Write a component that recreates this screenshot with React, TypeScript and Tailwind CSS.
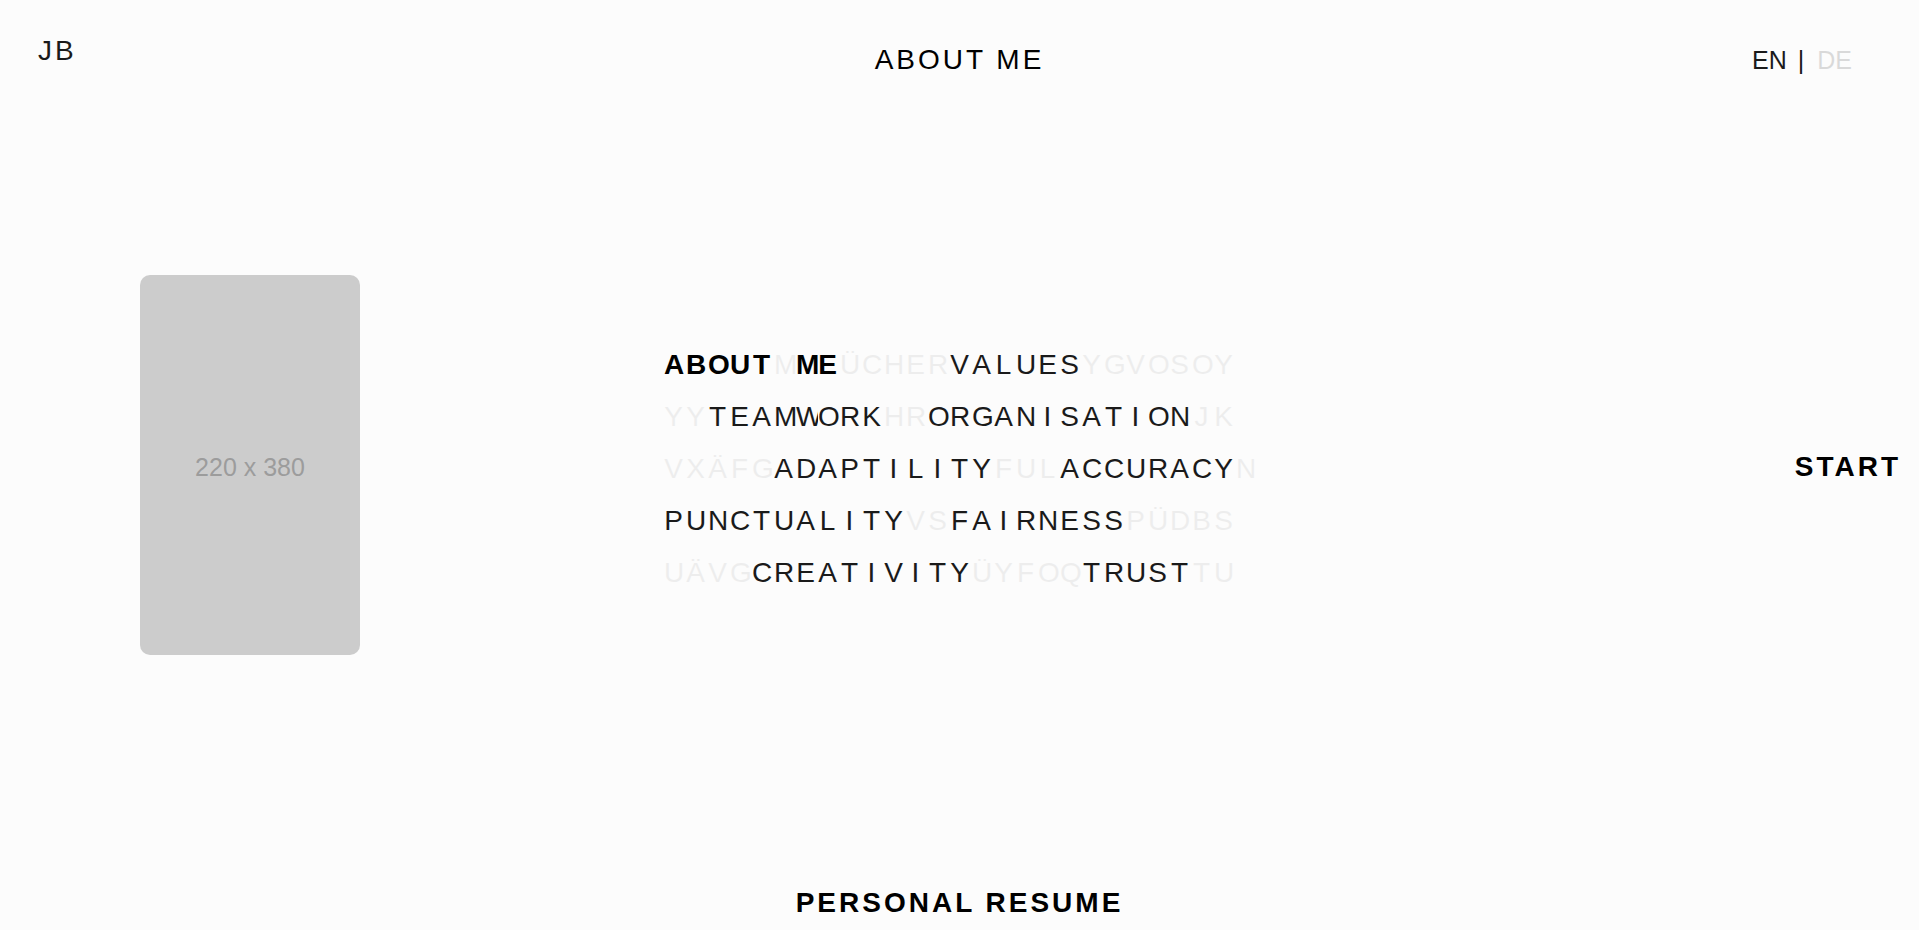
type Tone = 'noise' | 'word' | 'active';
type Segment = { text: string; tone: Tone };

const noise = (text: string): Segment => ({ text, tone: 'noise' });
const word = (text: string): Segment => ({ text, tone: 'word' });
const active = (text: string): Segment => ({ text, tone: 'active' });

const rows: Segment[][] = [
  [active('ABOUT'), noise('M'), active('ME'), noise('ÜCHER'), word('VALUES'), noise('YGVOSOY')],
  [noise('YY'), word('TEAMWORK'), noise('HR'), word('ORGANISATION'), noise('JK')],
  [noise('VXÄFG'), word('ADAPTILITY'), noise('FUL'), word('ACCURACY'), noise('N')],
  [word('PUNCTUALITY'), noise('VS'), word('FAIRNESS'), noise('PÜDBS')],
  [noise('UÄVG'), word('CREATIVITY'), noise('ÜYFOQ'), word('TRUST'), noise('TU')],
];

const tones: Record<Tone, string> = {
  noise: 'opacity-[0.06]',
  word: '',
  active: 'font-bold text-black',
};

function LetterRow({ segments }: { segments: Segment[] }) {
  return (
    <div className="flex">
      {segments.map((segment, i) => (
        <span key={i} className={`flex ${tones[segment.tone]}`}>
          {[...segment.text].map((letter, j) => (
            <span key={j} className="w-[22px] overflow-hidden text-center">
              {letter}
            </span>
          ))}
        </span>
      ))}
    </div>
  );
}

export default function App() {
  return (
    <div className="grid min-h-screen grid-rows-[1fr_auto_1fr] bg-[#fcfcfc] font-['Liberation_Sans',Arial,sans-serif] text-[28px] leading-8 text-[#1a1a1a]">
      <header className="grid grid-cols-[1fr_auto_1fr] items-start">
        <a href="#home" className="justify-self-start pt-[35px] pl-[38px] tracking-[3px]">
          JB
        </a>
        <h1 className="pt-11 tracking-[3px] text-black">ABOUT ME</h1>
        <div className="flex justify-self-end pt-11 pr-[67px] text-[25px]">
          <button type="button" className="pr-[11px]">EN</button>
          <span>|</span>
          <button type="button" className="pl-[13px] opacity-15">DE</button>
        </div>
      </header>

      <main className="grid grid-cols-[34.6%_auto_1fr] items-center">
        <div
          role="img"
          aria-label="Portrait"
          className="ml-[140px] flex h-[380px] w-[220px] items-center justify-center rounded-[10px] bg-[#cccccc] pt-1 text-[25px] text-[#9c9c9c]"
        >
          220 x 380
        </div>
        <div className="flex flex-col gap-6 pt-2 leading-7 tracking-[3px]">
          {rows.map((segments, i) => (
            <LetterRow key={i} segments={segments} />
          ))}
        </div>
        <a href="#start" className="justify-self-end pt-1 pr-[18px] font-bold tracking-[3px] text-black">
          START
        </a>
      </main>

      <footer className="flex items-end justify-center pb-[11px]">
        <a href="#resume" className="font-bold tracking-[3px] text-black">
          PERSONAL RESUME
        </a>
      </footer>
    </div>
  );
}
